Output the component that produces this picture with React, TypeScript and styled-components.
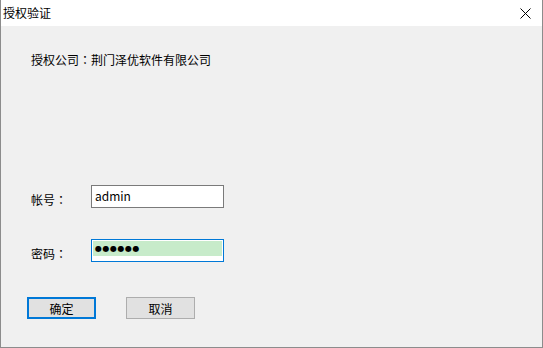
import { createGlobalStyle, styled } from "styled-components";

const GlobalStyle = createGlobalStyle`
    html, body {
        margin: 0;
        padding: 0;
        background: #ffffff;
    }
    * {
        box-sizing: border-box;
    }
`

const font = `"Noto Sans CJK SC", "Noto Sans", sans-serif`

const Window = styled.div`
    width: 543px;
    height: 348px;
    display: flex;
    flex-direction: column;
    border: 1px solid #8c8c8c;
    border-top: none;
    font-family: ${font};
    font-size: 12px;
    color: #000;
`

const TitleBar = styled.div`
    height: 26px;
    background: #ffffff;
    display: flex;
    align-items: center;
    justify-content: space-between;
    padding-left: 2px;
`

const Title = styled.span`
    font-size: 12px;
    line-height: 16px;
`

const CloseButton = styled.div`
    width: 46px;
    height: 26px;
    display: flex;
    align-items: center;
    justify-content: center;
    margin-right: -6px;
`

const Body = styled.div`
    flex: 1;
    background: #f0f0f0;
    display: flex;
    flex-direction: column;
    padding-top: 26px;
`

const Company = styled.div`
    padding-left: 30px;
    line-height: 16px;
`

// centred full-width colon, like the Windows UI font
const Colon = styled.span`
    font-family: "Noto Sans CJK TC", sans-serif;
`

const Form = styled.div`
    display: flex;
    flex-direction: column;
    gap: 31px;
    margin-top: 117px;
    padding-left: 30px;
`

const Row = styled.div`
    display: flex;
    align-items: center;
`

const Label = styled.span`
    width: 60px;
    line-height: 16px;
    padding-top: 7px;
`

const TextBox = styled.div<{ $focused?: boolean }>`
    width: 133px;
    height: 23px;
    background: #ffffff;
    border: 1px solid ${(p) => (p.$focused ? "#0078d7" : "#7a7a7a")};
    padding: 1px;
    display: flex;
`

const TextValue = styled.span`
    padding-left: 2px;
    line-height: 17px;
`

const Highlight = styled.div`
    width: 100%;
    height: 15px;
    background: #c7ebca;
    display: flex;
    align-items: center;
    padding-left: 2px;
`

const Dots = styled.span`
    font-family: "DejaVu Sans", sans-serif;
    font-size: 8px;
    letter-spacing: 0.5px;
    line-height: 10px;
`

const Buttons = styled.div`
    display: flex;
    gap: 30px;
    margin-top: 35px;
    padding-left: 26px;
`

const Button = styled.div<{ $default?: boolean }>`
    width: 69px;
    height: 22px;
    background: #e1e1e1;
    border: ${(p) => (p.$default ? "2px solid #0078d7" : "1px solid #adadad")};
    display: flex;
    align-items: center;
    justify-content: center;
    font-size: 12px;
`

export default function App() {
    return (
        <>
            <GlobalStyle />
            <Window>
                <TitleBar>
                    <Title>授权验证</Title>
                    <CloseButton>
                        <svg width="11" height="11" viewBox="0 0 11 11">
                            <path d="M0.5 0.5 L10.5 10.5 M10.5 0.5 L0.5 10.5" stroke="#000" strokeWidth="1" fill="none" />
                        </svg>
                    </CloseButton>
                </TitleBar>
                <Body>
                    <Company>授权公司<Colon>：</Colon>荆门泽优软件有限公司</Company>
                    <Form>
                        <Row>
                            <Label>帐号<Colon>：</Colon></Label>
                            <TextBox>
                                <TextValue>admin</TextValue>
                            </TextBox>
                        </Row>
                        <Row>
                            <Label>密码<Colon>：</Colon></Label>
                            <TextBox $focused>
                                <Highlight>
                                    <Dots>●●●●●●</Dots>
                                </Highlight>
                            </TextBox>
                        </Row>
                    </Form>
                    <Buttons>
                        <Button $default>确定</Button>
                        <Button>取消</Button>
                    </Buttons>
                </Body>
            </Window>
        </>
    );
}
